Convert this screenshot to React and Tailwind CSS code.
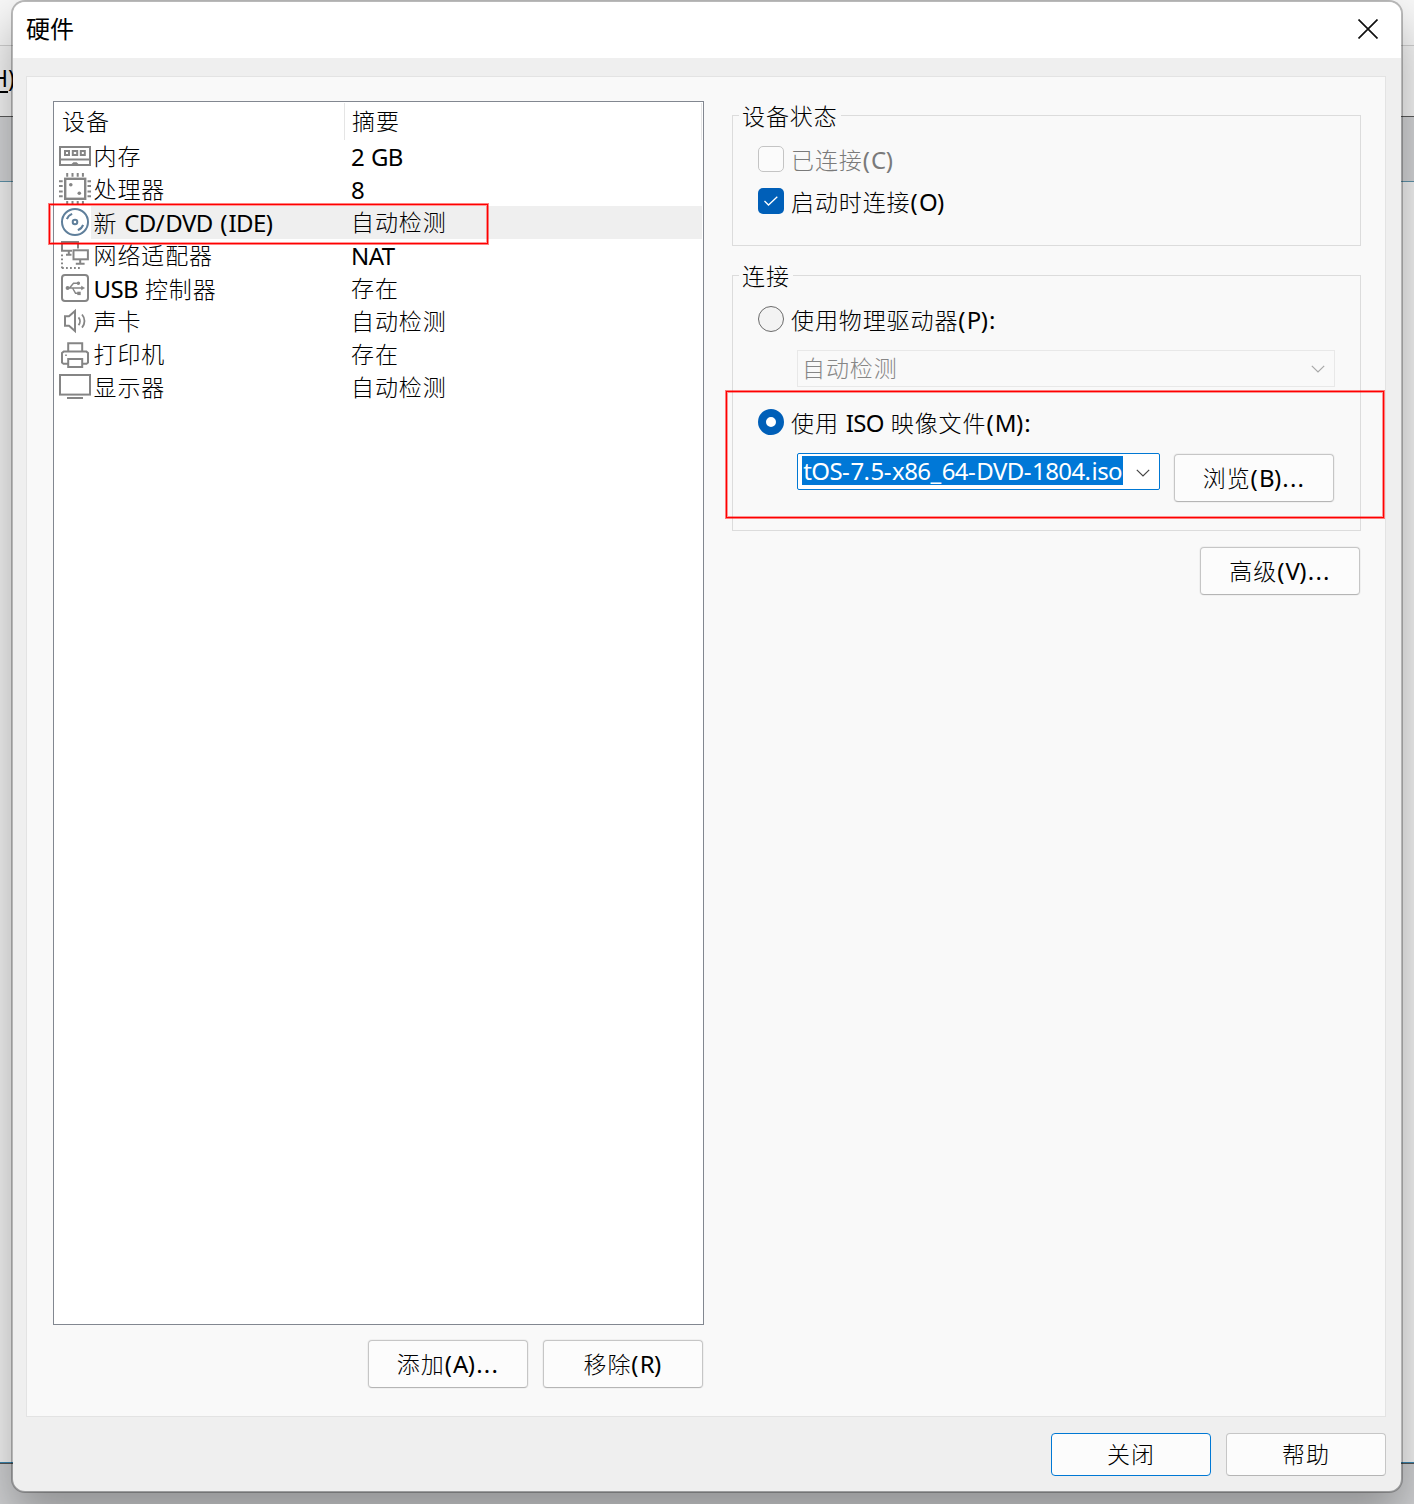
const MemoryIcon = () => (
  <>
    <rect x="1" y="7" width="30" height="18" />
    <path d="M1 19.5h30" strokeWidth="1.8" />
    <rect x="6" y="11" width="4" height="4" />
    <rect x="13.8" y="11" width="4.4" height="4" />
    <rect x="21.8" y="11" width="4" height="4" />
    <path d="M13 25l1.8-1.8h2.4L19 25" />
  </>
);

const CpuIcon = () => (
  <>
    <rect x="6.2" y="5.8" width="20" height="20" strokeWidth="2.4" />
    <path d="M8.2 0v3.7M13.5 0v3.7M18.7 0v3.7M23.9 0v3.7M8.2 28v3.5M13.5 28v3.5M18.7 28v3.5M23.9 28v3.5M0 8.2h3.7M0 13h3.7M0 18.4h3.7M0 23.2h3.7M28.5 8.2h3.5M28.5 13h3.5M28.5 18.4h3.5M28.5 23.2h3.5" />
    <circle cx="11.8" cy="11.8" r="1.8" fill="currentColor" stroke="none" />
    <circle cx="20.3" cy="20.3" r="1.8" fill="currentColor" stroke="none" />
  </>
);

const DiscIcon = () => (
  <>
    <circle cx="16" cy="16" r="13" fill="white" />
    <circle cx="16" cy="16" r="2.3" />
    <path d="M7.9 13.2a8.6 8.6 0 0 1 5.3-5.3M24.1 18.8a8.6 8.6 0 0 1-5.3 5.3" />
  </>
);

const NetworkIcon = () => (
  <>
    <path d="M13 11.8H3V3h16v6.5M9.8 12v4.5M7 15.8h5.5" />
    <rect x="14.5" y="11.3" width="14.4" height="9" />
    <path d="M21.2 20.5v4M16.8 24.8h8.8" />
    <path d="M3 15.5v13.8M3 29h19" strokeDasharray="1.8 2.2" />
  </>
);

const UsbIcon = () => (
  <>
    <rect x="3" y="3" width="26" height="26" rx="3" />
    <g strokeWidth="1.4">
      <path d="M8 16h15M10.5 16l4-4.7h4M13.5 16l3 5.2h3" />
      <circle cx="8.6" cy="16" r="1.3" fill="currentColor" />
      <circle cx="19.4" cy="11.3" r="1" fill="currentColor" />
      <rect x="19" y="20.4" width="2" height="2" fill="currentColor" />
      <path d="M22.5 14.2l3 1.8-3 1.8z" fill="currentColor" strokeWidth="0.6" />
    </g>
  </>
);

const SoundIcon = () => (
  <>
    <path d="M6 11.3h4L16 6v20l-6-5.2H6z" />
    <path d="M19.5 12.3a6 6 0 0 1 0 7.8M23 9.5a10 10 0 0 1 0 13.2" strokeWidth="1.8" />
  </>
);

const PrinterIcon = () => (
  <>
    <path d="M9.2 13V5.3h14V13" />
    <path d="M9 25.8H4.5L3 24.5V15l1.8-1.6h22.5L29 15v9.5l-1.5 1.3H23" />
    <rect x="9.2" y="21" width="14" height="8" />
    <path d="M6.2 17.3h1.6" strokeWidth="1.4" />
  </>
);

const DisplayIcon = () => (
  <>
    <rect x="1" y="4" width="30" height="19.6" />
    <path d="M8 27h16" />
  </>
);

const devices = [
  { name: "内存", summary: "2 GB", Icon: MemoryIcon },
  { name: "处理器", summary: "8", Icon: CpuIcon },
  { name: "新 CD/DVD (IDE)", summary: "自动检测", Icon: DiscIcon, selected: true },
  { name: "网络适配器", summary: "NAT", Icon: NetworkIcon },
  { name: "USB 控制器", summary: "存在", Icon: UsbIcon },
  { name: "声卡", summary: "自动检测", Icon: SoundIcon },
  { name: "打印机", summary: "存在", Icon: PrinterIcon },
  { name: "显示器", summary: "自动检测", Icon: DisplayIcon },
];

const runStyle = (run) => {
  if (/^[A-Za-z0-9]/.test(run)) return "text-[24px] tracking-[-0.6px]";
  if (/[():]/.test(run)) return "text-[24px] tracking-[1.2px]";
  if (/^[\x20-\x7e]/.test(run)) return "text-[24px] tracking-[0.6px]";
  return "text-[23px] font-light tracking-[0.9px]";
};

// letters are set tight, punctuation and Chinese a bit wider
const Label = ({ children }) => (
  <span className="whitespace-pre">
    {children.match(/[A-Za-z0-9]+|[^\x20-\x7e]+|[^A-Za-z0-9\u0080-\uffff]+/g).map((run, i) => (
      <span key={i} className={runStyle(run)}>
        {run}
      </span>
    ))}
  </span>
);

const Button = ({ children, className = "h-12 border-[#c6c6c6] border-b-[#b5b5b5] shadow-[0_0_0_1px_#f0f0f0]" }) => (
  <button
    className={`flex w-40 shrink-0 items-center justify-center rounded-[4px] border bg-[#fcfcfc] ${className}`}
  >
    <Label>{children}</Label>
  </button>
);

const Chevron = ({ className }) => (
  <svg viewBox="0 0 14 8" className={`h-2 w-3.5 ${className}`} fill="none" stroke="currentColor" strokeWidth="1.2">
    <path d="M0.8 0.8L7 7l6.2-6.2" />
  </svg>
);

const Highlight = ({ className }) => (
  <div
    className={`pointer-events-none absolute border border-[#ff0000]/50 shadow-[inset_0_0_0_1px_#ff0000,inset_0_0_0_2px_rgba(255,0,0,0.4)] ${className}`}
  />
);

const Backdrop = () => (
  <div className="col-start-1 row-start-1 flex flex-col bg-[#f0f0f0]">
    <div className="h-[46px] border-b border-[#cfcfcf] bg-[#f7f7f7]" />
    <div className="flex h-[71px] items-center border-b border-[#5a5a5a] bg-[#f3f3f3] pb-1.5">
      <span className="-ml-[9px] text-[23px]">
        <span className="underline underline-offset-4">H</span>)
      </span>
    </div>
    <div className="h-[65px] border-b border-[#5f93aa] bg-[#d3d4d6]" />
    <div className="h-[1280px] bg-[#f2f2f2]" />
    <div className="h-0.5 border-b border-[#555] bg-[#3a86b0]" />
    <div className="flex-1 bg-[#cfd0d2]" />
  </div>
);

const DeviceList = () => (
  <div className="relative h-[1224px] w-[651px] border border-[#828790] bg-white">
    <div className="flex h-[38px] items-stretch pt-px pr-px">
      <div className="flex w-[291px] items-center border-r border-[#e5e5e5] pl-2">
        <Label>设备</Label>
      </div>
      <div className="flex flex-1 items-center border-r border-[#e5e5e5] pl-[7px]">
        <Label>摘要</Label>
      </div>
    </div>
    {devices.map(({ name, summary, Icon, selected }) => (
      <div key={name} className="flex h-[33px] pr-px pl-[5px]">
        <svg
          viewBox="0 0 32 33"
          className={`h-[33px] w-8 shrink-0 ${selected ? "text-[#5f7f9b]" : "text-[#858585]"}`}
          fill="none"
          stroke="currentColor"
          strokeWidth="2"
        >
          <Icon />
        </svg>
        <div className={`flex flex-1 items-center pl-[2.5px] ${selected ? "bg-[#efefef]" : ""}`}>
          <div className="w-[257.5px]">
            <Label>{name}</Label>
          </div>
          <Label>{summary}</Label>
        </div>
      </div>
    ))}
    <Highlight className="top-[101px] -left-[6px] h-[42px] w-[441px]" />
  </div>
);

const Group = ({ title, className, children }) => (
  <fieldset className={`w-[629px] border border-[#dcdcdc] pl-[6px] ${className}`}>
    <legend className="flex h-[29px] items-center px-[3px] pt-0.5">
      <Label>{title}</Label>
    </legend>
    {children}
  </fieldset>
);

const Radio = ({ checked, children }) => (
  <div className="flex h-[26px] items-center gap-[7px]">
    <span
      className={`size-[26px] rounded-full ${
        checked ? "border-8 border-[#005fb8] bg-white" : "border-[1.5px] border-[#6b6b6b] bg-[#f3f3f3]"
      }`}
    />
    <span className="pt-0.5">
      <Label>{children}</Label>
    </span>
  </div>
);

const App = () => {
  return (
    <div className="grid h-[1504px] w-[1414px] overflow-hidden font-['Noto_Sans','Noto_Sans_CJK_SC',sans-serif] leading-none text-black">
      <Backdrop />
      <div className="col-start-1 row-start-1 mr-[11px] mb-[11px] ml-[11px] flex flex-col overflow-hidden rounded-[14px] border-2 border-black/25 bg-[#efefef] bg-clip-padding shadow-[0_24px_48px_rgba(0,0,0,0.3)]">
        <div className="flex h-14 shrink-0 items-center justify-between bg-white pr-[23px] pb-0.5 pl-[13px]">
          <span className="text-[24px]">硬件</span>
          <svg viewBox="0 0 20 20" className="size-5" stroke="#111" strokeWidth="1.7">
            <path d="M0.5 0.5l19 19M19.5 0.5l-19 19" />
          </svg>
        </div>

        <div className="mx-[13px] mt-[18px] flex h-[1341px] w-[1360px] shrink-0 gap-7 border border-[#e3e3e3] bg-[#f9f9f9] pt-6 pl-[26px]">
          <div>
            <DeviceList />
            <div className="mt-[15px] flex justify-end gap-[15px] pr-px">
              <Button>添加(A)...</Button>
              <Button>移除(R)</Button>
            </div>
          </div>

          <div className="relative w-[629px]">
            <Group title="设备状态" className="h-[145px]">
              <div className="mt-4 flex flex-col gap-4 pl-[19px]">
                <div className="flex h-[26px] items-center gap-[7px] text-[#7a7a7a]">
                  <span className="size-[26px] rounded-[5px] border-[1.5px] border-[#c4c4c4] bg-[#fbfbfb]" />
                  <span className="pt-0.5">
                    <Label>已连接(C)</Label>
                  </span>
                </div>
                <div className="flex h-[26px] items-center gap-[7px]">
                  <span className="flex size-[26px] items-center justify-center rounded-[5px] bg-[#005fb8]">
                    <svg viewBox="0 0 14 10" className="h-2.5 w-3.5" fill="none" stroke="white" strokeWidth="1.3">
                      <path d="M0.5 5l4 4L13.3 0.7" />
                    </svg>
                  </span>
                  <span className="pt-0.5">
                    <Label>启动时连接(O)</Label>
                  </span>
                </div>
              </div>
            </Group>

            <Group title="连接" className="mt-[15px] h-[270px]">
              <div className="mt-4 pl-[19px]">
                <Radio>使用物理驱动器(P):</Radio>
                <div className="mt-[18px] ml-[39px] flex h-[37px] w-[538px] items-center justify-between border border-[#e8e8e8] pr-[9px] pl-1 text-[#868686]">
                  <Label>自动检测</Label>
                  <Chevron className="text-[#a8a8a8]" />
                </div>
                <div className="mt-[22px]">
                  <Radio checked>使用 ISO 映像文件(M):</Radio>
                </div>
                <div className="mt-[18px] ml-[39px] flex gap-[14px]">
                  <div className="flex h-[37px] w-[363px] items-start justify-between rounded-[2px] border border-[#0078d4] bg-white pt-0.5 pr-[9px] pl-1">
                    <div className="flex h-[29px] w-[321px] items-center justify-end bg-[#0078d7] pr-px text-white">
                      <Label>tOS-7.5-x86_64-DVD-1804.iso</Label>
                    </div>
                    <Chevron className="mt-[13px] text-[#444]" />
                  </div>
                  <div className="pt-px">
                    <Button>浏览(B)...</Button>
                  </div>
                </div>
              </div>
            </Group>

            <div className="mt-4 flex justify-end pr-px">
              <Button>高级(V)...</Button>
            </div>
            <Highlight className="top-[289px] -left-[7px] h-[129px] w-[660px]" />
          </div>
        </div>

        <div className="mt-4 mr-[15px] flex justify-end gap-[15px]">
          <Button className="h-[43px] border-[#0078d4]">关闭</Button>
          <Button className="h-[43px] border-[#c6c6c6] border-b-[#b5b5b5]">帮助</Button>
        </div>
      </div>
    </div>
  );
};

export default App;
